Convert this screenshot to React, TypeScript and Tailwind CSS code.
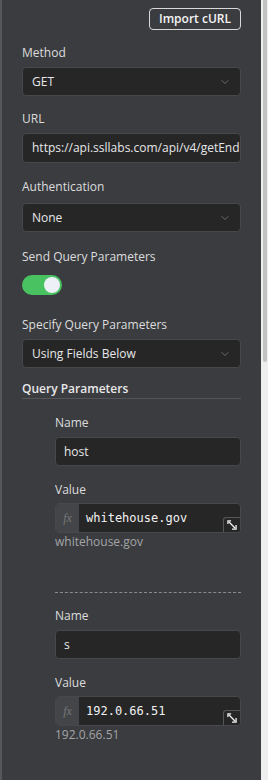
import { ChevronDown } from 'lucide-react'

const sans = { fontFamily: '"Open Sans", "Noto Sans", sans-serif' }

function Label({ children, className = '' }: { children: React.ReactNode; className?: string }) {
  return <div className={`text-[12px] leading-[18px] text-[#dcdcde] ${className}`}>{children}</div>
}

function Select({ value, className = '' }: { value: string; className?: string }) {
  return (
    <div className={`h-[29px] rounded-[4px] border border-[#47484b] bg-[#262627] flex items-center justify-between pl-[9px] pr-[9px] ${className}`}>
      <span className="text-[12px] text-[#e6e6e8]">{value}</span>
      <ChevronDown className="w-[12px] h-[12px] text-[#808184]" strokeWidth={1.5} />
    </div>
  )
}

function ExpandIcon() {
  return (
    <div className="absolute right-0 bottom-0 w-[17px] h-[15px] rounded-tl-[3px] border-l border-t border-[#55565a] bg-[#262627] flex items-center justify-center">
      <svg width="10" height="10" viewBox="0 0 11 11" fill="none" stroke="#f2f2f2" strokeWidth="1.4">
        <path d="M1 4.5V1h3.5" />
        <path d="M2 2l7 7" />
        <path d="M10 5.5V10H5.5" />
      </svg>
    </div>
  )
}

function Param({ name, value, first }: { name: string; value: string; first?: boolean }) {
  return (
    <div className={first ? 'mt-[15px]' : 'mt-[14px]'}>
      <Label>Name</Label>
      <div className="mt-[5px] h-[29px] rounded-[4px] border border-[#47484b] bg-[#262627] flex items-center pl-[8px] text-[12px] text-[#e6e6e8]">
        {name}
      </div>
      <Label className="mt-[15px]">Value</Label>
      <div className="mt-[4px] h-[30px] rounded-[4px] border border-[#47484b] bg-[#262627] flex relative overflow-hidden">
        <div className="w-[23px] bg-[#444548] flex items-center justify-center">
          <span className="text-[12px] italic text-[#77787b]" style={{ fontFamily: '"Liberation Serif", serif' }}>fx</span>
        </div>
        <div className="flex-1 flex items-center pl-[7px] text-[12px] text-[#f2f2f2]" style={{ fontFamily: '"DejaVu Sans Mono", monospace' }}>
          {value}
        </div>
        <ExpandIcon />
      </div>
      <div className="text-[12px] leading-[18px] text-[#a3a4a7]">{value}</div>
    </div>
  )
}

export default function App() {
  return (
    <div className="w-[268px] h-[780px] flex bg-[#3b3c3f] overflow-hidden" style={sans}>
      <div className="flex-1 min-w-0 border-l-2 border-[#55575b] pl-[20px] pr-[20px] pt-[8px]">
        <div className="flex justify-end">
          <button className="h-[22px] px-[9px] rounded-[4px] border border-[#d8d8da] text-[12px] font-semibold text-[#f4f4f5] leading-none">
            Import cURL
          </button>
        </div>

        <Label className="mt-[14px]">Method</Label>
        <Select value="GET" className="mt-[5px]" />

        <Label className="mt-[14px]">URL</Label>
        <div className="mt-[5px] h-[30px] rounded-[4px] border border-[#47484b] bg-[#262627] flex items-center pl-[9px] overflow-hidden whitespace-nowrap text-[12px] text-[#e6e6e8]">
          https://api.ssllabs.com/api/v4/getEndpointData
        </div>

        <Label className="mt-[15px]">Authentication</Label>
        <Select value="None" className="mt-[7px]" />

        <Label className="mt-[16px]">Send Query Parameters</Label>
        <div className="mt-[9px] w-[40px] h-[20px] rounded-full bg-[#49c261] flex items-center justify-end pr-[2px]">
          <div className="w-[16px] h-[16px] rounded-full bg-[#eef0f8]" />
        </div>

        <Label className="mt-[21px]">Specify Query Parameters</Label>
        <Select value="Using Fields Below" className="mt-[5px]" />

        <div className="mt-[12px] text-[12px] leading-[17px] font-semibold text-[#e8e8ea] border-b border-[#545559] pb-[1px]">
          Query Parameters
        </div>

        <div className="pl-[33px]">
          <Param name="host" value="whitehouse.gov" first />
          <div className="mt-[41px] border-t border-dashed border-[#8a8b8e]" />
          <Param name="s" value="192.0.66.51" />
        </div>
      </div>
      <div className="w-[7px] shrink-0 bg-[#eeeeee] flex">
        <div className="ml-[2px] w-[4px] h-[362px] bg-[#c2c2c2] rounded-b-[2px]" />
      </div>
    </div>
  )
}
